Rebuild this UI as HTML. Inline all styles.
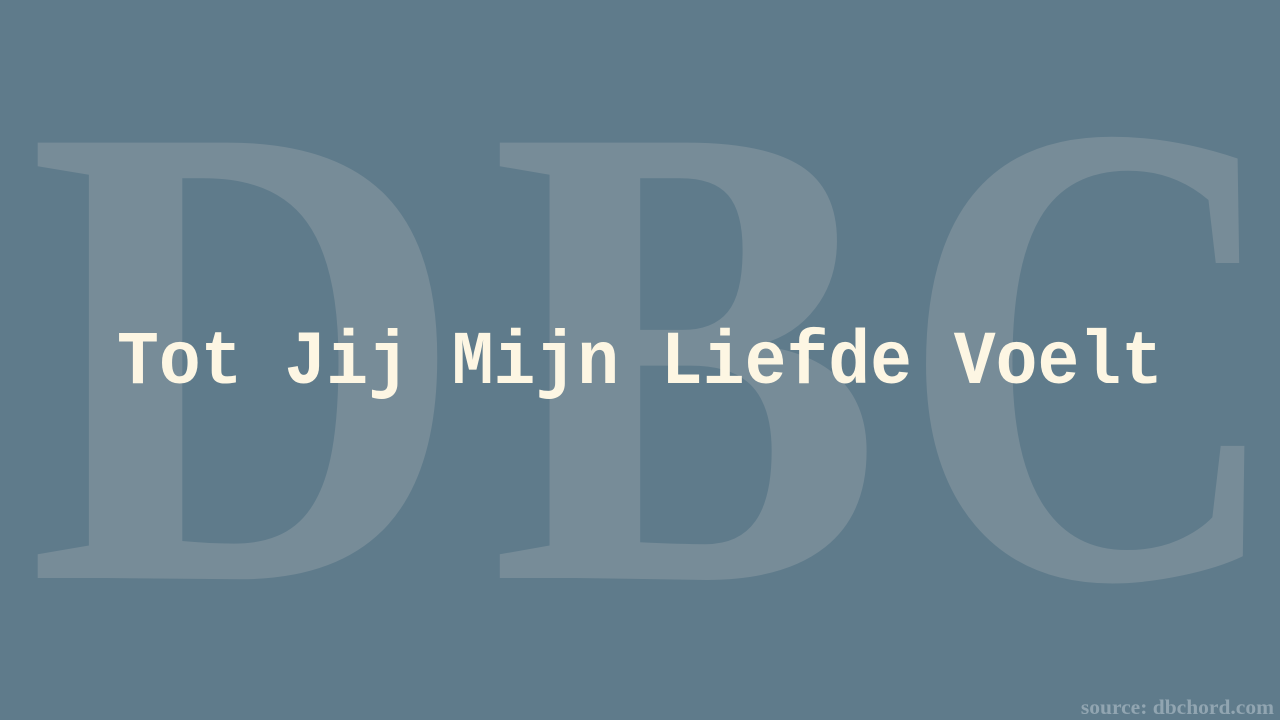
<!DOCTYPE html>
<html><head><meta charset="utf-8"><style>
html,body{margin:0;padding:0;width:1280px;height:720px;overflow:hidden;background:#5f7b8b}
svg{position:absolute;left:0;top:0}
</style></head><body>
<svg width="1280" height="720" viewBox="0 0 1280 720">
<g fill="#778c98" font-family="Liberation Serif, serif" font-weight="bold" font-size="665">
<text x="27" y="578" textLength="440" lengthAdjust="spacingAndGlyphs">D</text>
<text x="490" y="578" textLength="393" lengthAdjust="spacingAndGlyphs">B</text>
<text x="900" y="577" textLength="385" lengthAdjust="spacingAndGlyphs">C</text>
</g>
<text x="117" y="383" fill="#fdf6e3" font-family="Liberation Mono, monospace" font-weight="bold" font-size="76" textLength="1046" lengthAdjust="spacingAndGlyphs">Tot Jij Mijn Liefde Voelt</text>
<text x="1274" y="714" text-anchor="end" fill="#91a5b1" font-family="Liberation Serif, serif" font-weight="bold" font-size="21.5">source: dbchord.com</text>
</svg>
</body></html>
